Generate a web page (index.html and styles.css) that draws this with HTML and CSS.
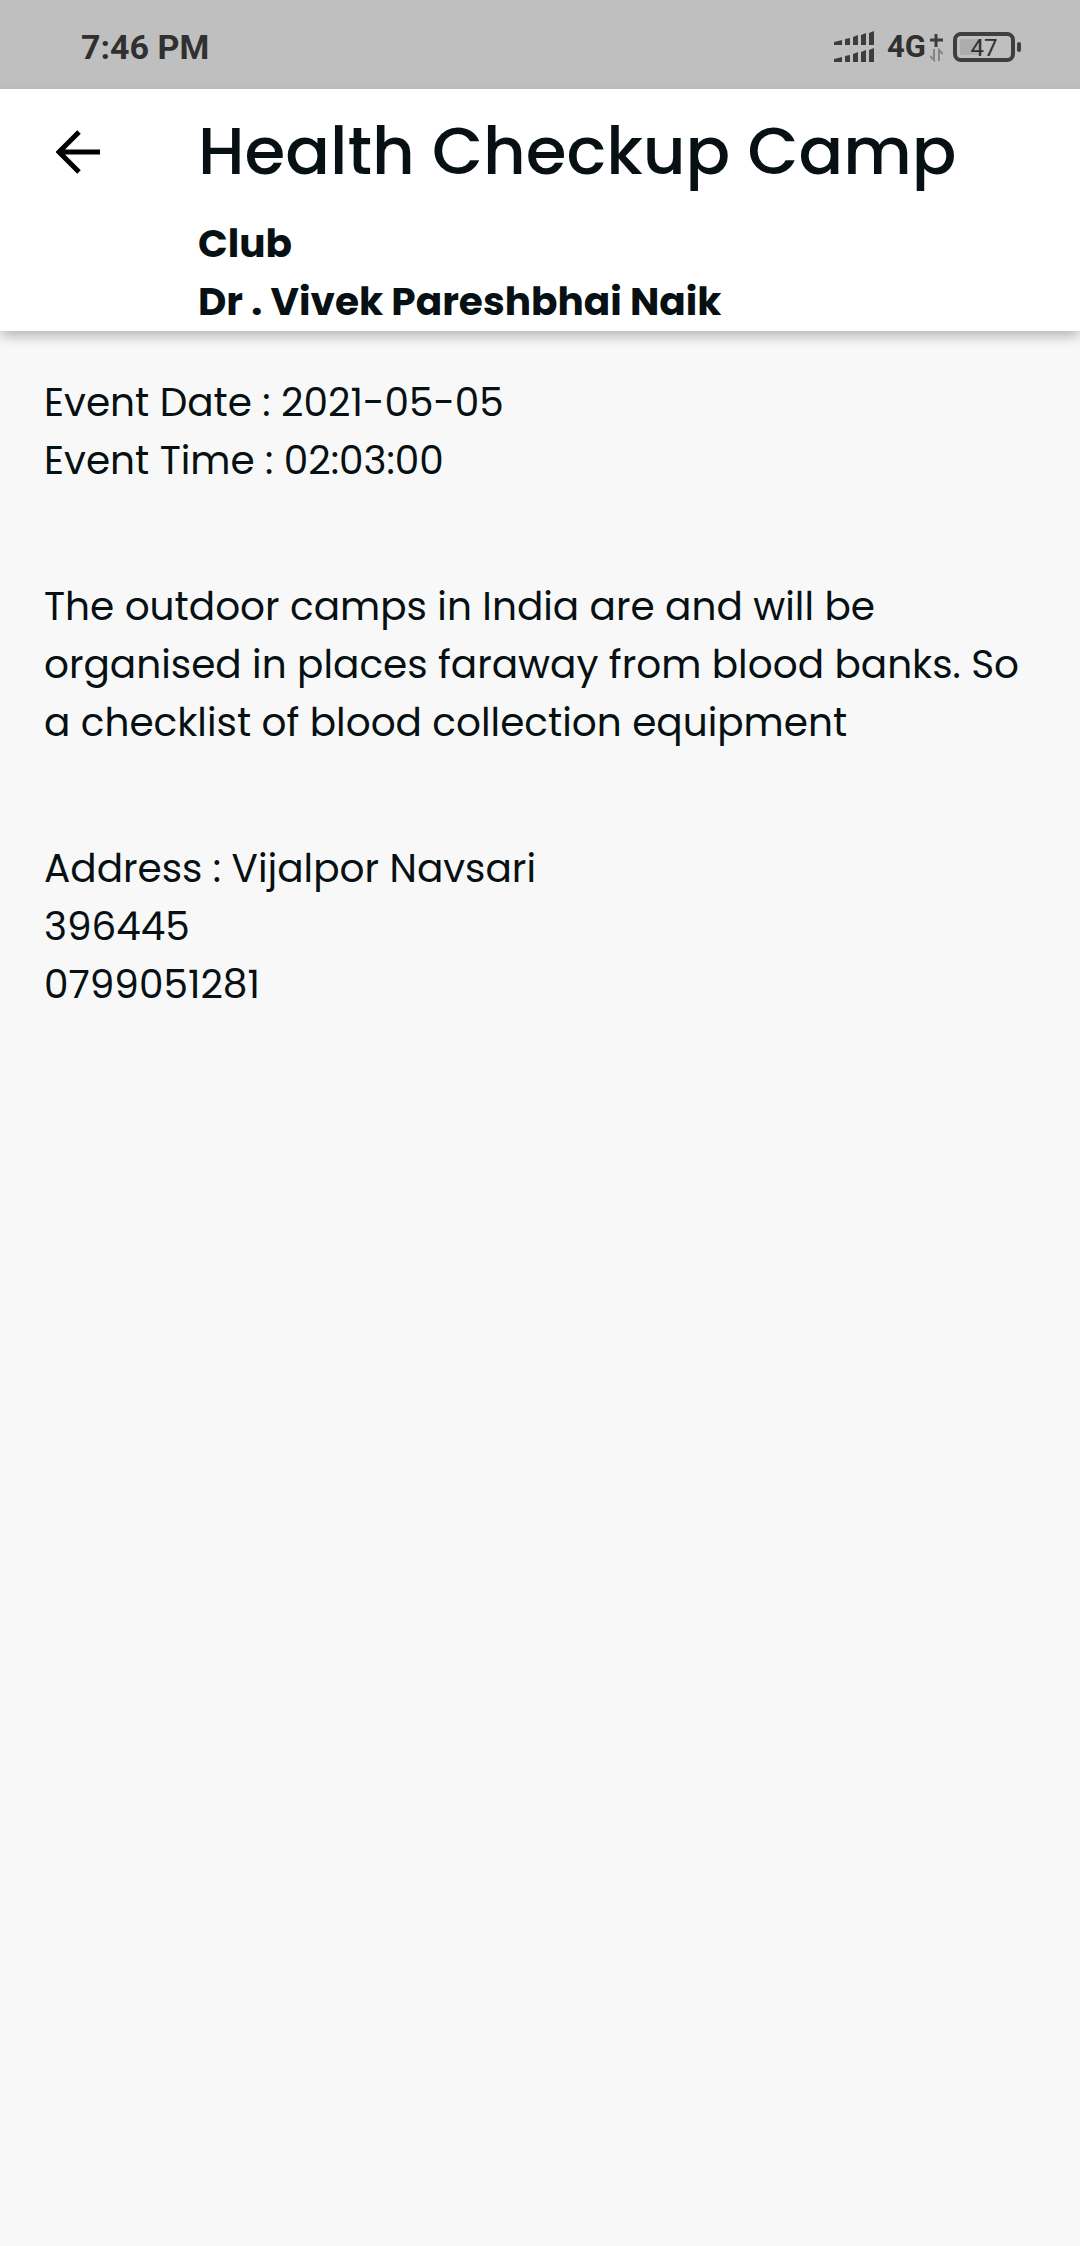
FILE: index.html
```html
<!DOCTYPE html>
<html lang="en">
<head>
<meta charset="utf-8">
<meta name="viewport" content="width=device-width, initial-scale=1">
<title>Health Checkup Camp</title>
<link rel="stylesheet" href="styles.css">
</head>
<body>
<div class="status-bar">
  <span class="clock">7:46 PM</span>
  <div class="indicators">
    <svg class="signal" viewBox="0 0 40 32" aria-hidden="true">
      <path d="M0 11l8-2v5H0zM11 8l5-1v7h-5zM19 6l5-2v10h-5zM27 4l5-2v12h-5zM35 2l5-2v14h-5z"/>
      <path d="M0 28l8-2v5H0zM11 25l5-1v7h-5zM19 23l5-2v10h-5zM27 21l5-2v12h-5zM35 19l5-2v14h-5z"/>
    </svg>
    <span class="network">4G</span>
    <svg class="data" viewBox="0 0 13 30" aria-hidden="true">
      <path class="plus" d="M0 8h13M6 2v13"/>
      <path class="arrows" d="M4 17v11L0 24M9 29V18l4 4"/>
    </svg>
    <div class="battery"><span class="level">47</span></div>
  </div>
</div>
<header class="app-bar">
  <button class="back" type="button" aria-label="Back">
    <svg viewBox="0 0 44 44" aria-hidden="true"><path d="M44 22H4M23 2L3 22l20 20"/></svg>
  </button>
  <div class="heading">
    <h1>Health Checkup Camp</h1>
    <p>Club</p>
    <p>Dr . Vivek Pareshbhai Naik</p>
  </div>
</header>
<main class="details">
  <section>
    <p>Event Date : 2021-05-05</p>
    <p>Event Time : 02:03:00</p>
  </section>
  <section>
    <p>The outdoor camps in India are and will be organised in places faraway from blood banks. So a checklist of blood collection equipment</p>
  </section>
  <section>
    <p>Address : Vijalpor Navsari</p>
    <p>396445</p>
    <p>0799051281</p>
  </section>
</main>
</body>
</html>
```
FILE: styles.css
```css
* { box-sizing: border-box; }
body {
  margin: 0;
  min-height: 100vh;
  background: #f8f8f8;
  color: #071013;
  font: 400 39px/58px Poppins, Inter, sans-serif;
}
h1, p { margin: 0; }

.status-bar {
  display: flex;
  justify-content: space-between;
  align-items: center;
  height: 89px;
  padding: 5px 59px 0 81px;
  background: #bfbfbf;
  color: #303030;
  font-family: Roboto, sans-serif;
}
.clock { font-size: 34px; font-weight: 700; line-height: 40px; }
.indicators { display: flex; align-items: center; }
.signal { width: 40px; height: 32px; margin-right: 13px; fill: #3d3d3d; }
.network { font-size: 31px; font-weight: 700; line-height: 32px; }
.data { width: 13px; height: 30px; margin: 0 10px 0 4px; fill: none; }
.plus { stroke: #3d3d3d; stroke-width: 3; }
.arrows { stroke: #858585; stroke-width: 2; }
.battery {
  position: relative;
  width: 62px;
  height: 30px;
  margin-right: 6px;
  padding: 2px;
  border: 4px solid #3d403e;
  border-radius: 8px;
  background: linear-gradient(#adadad, #adadad) 3px 3px / 22px 16px no-repeat;
}
.battery::after {
  content: "";
  position: absolute;
  top: 6px;
  right: -10px;
  width: 4px;
  height: 10px;
  border-radius: 2px;
  background: #3d403e;
}
.level { display: block; font-size: 24px; line-height: 20px; text-align: center; }

.app-bar {
  position: relative;
  display: flex;
  align-items: flex-start;
  padding: 14px 44px 0 49px;
  background: #fff;
  box-shadow: 0 6px 12px -1px rgba(0, 0, 0, 0.28);
}
.back {
  flex: none;
  width: 58px;
  height: 58px;
  margin: 20px 91px 0 0;
  padding: 7px;
  border: 0;
  background: none;
}
.back svg { display: block; width: 44px; height: 44px; fill: none; stroke: #000; stroke-width: 5; }
.heading { font-weight: 700; }
.heading h1 { margin-bottom: 16px; font-size: 66px; font-weight: 500; line-height: 96px; }

.details {
  display: flex;
  flex-direction: column;
  gap: 88px;
  padding: 43px 44px;
}
```
